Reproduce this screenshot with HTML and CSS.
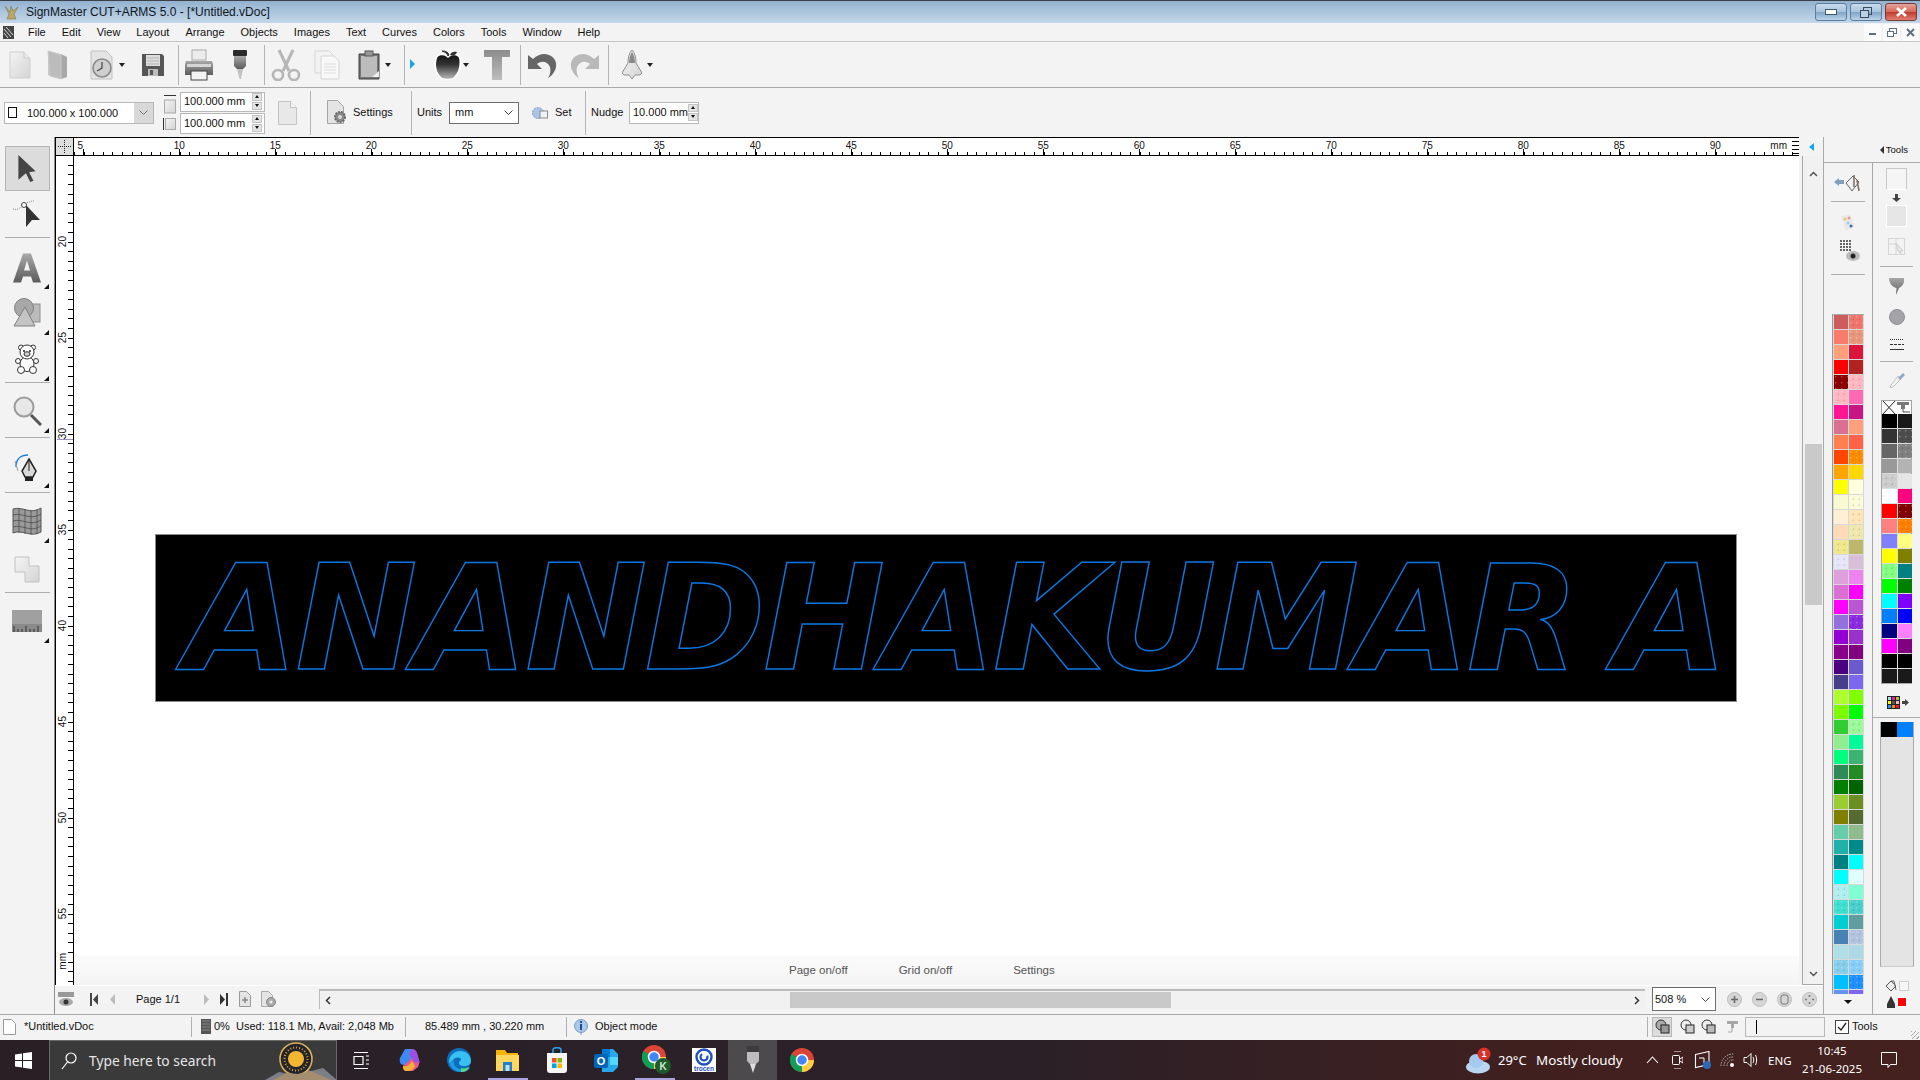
FILE: index.html
```html
<!DOCTYPE html>
<html lang="en">
<head>
<meta charset="utf-8">
<title>SignMaster CUT+ARMS 5.0</title>
<link rel="stylesheet" href="styles.css">
</head>
<body>
<svg class="defs" aria-hidden="true">
  <defs>
    <linearGradient id="gv" x1="0" y1="0" x2="0" y2="1"><stop offset="0" stop-color="#a8a8a8"/><stop offset="1" stop-color="#5c5c5c"/></linearGradient>
    <linearGradient id="gl" x1="0" y1="0" x2="1" y2="1"><stop offset="0" stop-color="#f4f4f4"/><stop offset="1" stop-color="#d4d4d4"/></linearGradient>
    <linearGradient id="gt" x1="0" y1="0" x2="0" y2="1"><stop offset="0" stop-color="#8c8c8c"/><stop offset="1" stop-color="#bdbdbd"/></linearGradient>
    <linearGradient id="ga" x1="0" y1="0" x2="0" y2="1"><stop offset="0" stop-color="#111"/><stop offset=".4" stop-color="#333"/><stop offset="1" stop-color="#bbb"/></linearGradient>
  </defs>
</svg>

<header class="titlebar">
  <svg class="ti" width="15" height="17" viewBox="0 0 15 17"><path d="M1 2l5 6 1-6 2 5 5-4-4 7 2 5H3l2-5z" fill="#b9a765" stroke="#7d7550" stroke-width=".6"/></svg>
  <span class="title-text">SignMaster CUT+ARMS 5.0 - [*Untitled.vDoc]</span>
  <div class="winbtns">
    <span class="wb"><svg width="12" height="7" viewBox="0 0 12 7"><rect x=".5" y=".5" width="11" height="5" fill="#fff" stroke="#44586e"/></svg></span>
    <span class="wb"><svg width="12" height="11" viewBox="0 0 12 11"><rect x="3.5" y=".5" width="8" height="7" fill="none" stroke="#3c4c5e"/><rect x=".5" y="3.5" width="8" height="7" fill="#b8d0e4" stroke="#3c4c5e"/></svg></span>
    <span class="wb wb-close"><svg width="13" height="10" viewBox="0 0 13 10"><path d="M2 1l9 8M11 1l-9 8" stroke="#fff" stroke-width="2.6"/></svg></span>
  </div>
</header>

<nav class="menubar">
  <svg class="menu-ic" width="11" height="13" viewBox="0 0 11 13"><rect width="11" height="13" fill="#444"/><path d="M1 3l7 8M3 1l7 8M1 7l4 5" stroke="#ddd"/></svg>
  <span>File</span><span>Edit</span><span>View</span><span>Layout</span><span>Arrange</span><span>Objects</span><span>Images</span><span>Text</span><span>Curves</span><span>Colors</span><span>Tools</span><span>Window</span><span>Help</span>
  <div class="mdibtns">
    <span class="mdi"><svg width="8" height="8" viewBox="0 0 8 8"><rect y="5" width="7" height="2" fill="#5f6f80"/></svg></span>
    <span class="mdi"><svg width="10" height="9" viewBox="0 0 10 9"><rect x="2.5" y=".5" width="7" height="5" fill="none" stroke="#5f6f80"/><rect x=".5" y="3.5" width="6" height="5" fill="#fff" stroke="#5f6f80"/></svg></span>
    <span class="mdi"><svg width="9" height="9" viewBox="0 0 9 9"><path d="M1 1l7 7M8 1l-7 7" stroke="#5f6f80" stroke-width="2"/></svg></span>
  </div>
</nav>

<section class="toolbar1">
  <span class="slot s1"><svg width="22" height="28" viewBox="0 0 22 28"><path d="M1 1h14l6 6v20H1z" fill="url(#gl)" stroke="#cfcfcf"/><path d="M15 1v6h6" fill="#e9e9e9" stroke="#cfcfcf"/></svg></span>
  <span class="slot s2"><svg width="22" height="32" viewBox="0 0 22 32"><path d="M1 2l13 3v2l6 1v20l-6 2-13-4z" fill="#c6c6c6"/><path d="M14 5l6 3v20l-6 2z" fill="#a9a9a9"/><path d="M1 2l13 4v24L3 27z" fill="#bcbcbc" stroke="#c9c9c9"/></svg></span>
  <span class="slot s3"><svg width="28" height="30" viewBox="0 0 28 30"><path d="M1 1h15l6 6v22H1z" fill="#e4e4e4" stroke="#c2c2c2"/><circle cx="12" cy="18" r="9" fill="#cfcfcf" stroke="#8a8a8a" stroke-width="1.6"/><path d="M12 12v6l-5 3" fill="none" stroke="#555" stroke-width="1.4"/></svg><i class="caret c3"></i></span>
  <span class="slot s4"><svg width="24" height="24" viewBox="0 0 24 24"><path d="M1 1h20l2 2v20H1z" fill="#565656"/><rect x="5" y="2" width="14" height="11" fill="#dedede"/><path d="M6 5h12M6 8h12M6 11h12" stroke="#b5b5b5"/><rect x="7" y="16" width="10" height="7" fill="#bdbdbd"/><rect x="9" y="17" width="3" height="5" fill="#555"/></svg></span>
  <i class="tsep"></i>
  <span class="slot s5"><svg width="30" height="32" viewBox="0 0 30 32"><rect x="8" y="1" width="14" height="10" fill="#ececec" stroke="#aaa"/><path d="M2 12h26l1 3v11H1V15z" fill="url(#gv)"/><rect x="3" y="15" width="24" height="3" fill="#d5d5d5"/><rect x="7" y="22" width="16" height="9" fill="#f3f3f3" stroke="#444"/></svg></span>
  <span class="slot s6"><svg width="16" height="30" viewBox="0 0 16 30"><rect x="1" y="0" width="14" height="6" rx="1" fill="#2a2a2a"/><path d="M2 6h12v10l-3 3H5l-3-3z" fill="url(#gv)"/><path d="M5 19h6l-2 10H7.500z" fill="#c2c2c2"/></svg></span>
  <i class="tsep"></i>
  <span class="slot s7"><svg width="30" height="32" viewBox="0 0 30 32"><g fill="none" stroke="#b6b6b6"><path d="M8 1l10 21M22 1L12 22" stroke-width="3"/><circle cx="7" cy="26" r="5" stroke-width="2.600"/><circle cx="23" cy="26" r="5" stroke-width="2.600"/></g></svg></span>
  <span class="slot s8"><svg width="26" height="30" viewBox="0 0 26 30"><path d="M1 1h14l4 4v18H1z" fill="#f3f3f3" stroke="#d5d5d5"/><path d="M7 6h13l5 5v18H7z" fill="#f8f8f8" stroke="#d5d5d5"/><path d="M10 14h12M10 17h12M10 20h12M10 23h12" stroke="#dcdcdc"/></svg></span>
  <span class="slot s9"><svg width="22" height="30" viewBox="0 0 22 30"><path d="M1 4h20v25H1z" fill="#777" stroke="#3e3e3e"/><rect x="3" y="6" width="16" height="21" fill="#bcbcbc"/><rect x="7" y="1" width="8" height="5" fill="#999" stroke="#555"/><path d="M14 27l7-6v6z" fill="#efefef"/></svg><i class="caret c9"></i></span>
  <i class="tsep"></i>
  <span class="slot s10"><i class="play"></i><svg width="30" height="32" viewBox="0 0 30 32"><path d="M15 8c4-4 11-3 12 2 1 8-2 15-6 19-3 2-10 2-13 0C4 25 1 18 3 10c1-5 8-6 12-2z" fill="url(#ga)" stroke="#fff" stroke-width="1.500"/><path d="M15 7c-1-3-3-4-6-5 4 0 6 1 7 4z" fill="#333" stroke="#333"/><path d="M17 6c1-3 4-4 7-3-1 3-4 4-7 3z" fill="#2c2c2c"/></svg><i class="caret c10"></i></span>
  <span class="slot s11"><svg width="26" height="30" viewBox="0 0 26 30"><path d="M0 0h26v7h-8v23H8V7H0z" fill="url(#gt)"/></svg></span>
  <i class="tsep"></i>
  <span class="slot s12"><svg width="30" height="28" viewBox="0 0 30 28"><path d="M0 4v14h14l-5-5c5-4 11-2 13 3 1 4 0 8-2 11 5-3 9-9 8-15C26 3 14-1 5 8z" fill="#666"/></svg></span>
  <span class="slot s13"><svg width="30" height="28" viewBox="0 0 30 28"><path d="M30 4v14H16l5-5c-5-4-11-2-13 3-1 4 0 8 2 11C5 24 1 18 2 12 4 3 16-1 25 8z" fill="#b9b9b9"/></svg></span>
  <i class="tsep"></i>
  <span class="slot s14"><svg width="22" height="30" viewBox="0 0 22 30"><path d="M11 0c3 3 4 8 4 13l6 10-2 2h-5l-3 4-3-4H3l-2-2 6-10c0-5 1-10 4-13z" fill="url(#gl)" stroke="#8f8f8f"/><path d="M11 2c2 3 3 7 3 11H8c0-4 1-8 3-11z" fill="#8a8a8a"/></svg><i class="caret c14"></i></span>
</section>

<section class="toolbar2">
  <div class="pagecombo">
    <i class="pc-rect"></i><span class="pc-text">100.000 x 100.000</span>
    <span class="pc-drop"><svg width="9" height="5" viewBox="0 0 9 5"><path d="M.5.500l4 4 4-4" fill="none" stroke="#777"/></svg></span>
  </div>
  <div class="sizeicons">
    <svg width="12" height="19" viewBox="0 0 12 19"><path d="M0 .500h12" stroke="#333"/><rect x=".5" y="5" width="11" height="13" fill="url(#gl)" stroke="#aaa"/></svg>
    <svg width="14" height="14" viewBox="0 0 14 14"><path d="M1.500 1v12" stroke="#333"/><rect x="3.500" y="1.500" width="10" height="11" fill="url(#gl)" stroke="#aaa"/></svg>
  </div>
  <div class="sizeboxes">
    <div class="sizebox"><span>100.000 mm</span><span class="spin"><i class="sp up"></i><i class="sp dn"></i></span></div>
    <div class="sizebox"><span>100.000 mm</span><span class="spin"><i class="sp up"></i><i class="sp dn"></i></span></div>
  </div>
  <svg class="pageic" width="19" height="24" viewBox="0 0 19 24"><path d="M.5.500h12l6 6v17H.5z" fill="#e8e8e8" stroke="#c4c4c4"/><path d="M12.500.500v6h6" fill="#f3f3f3" stroke="#c4c4c4"/></svg>
  <i class="bsep b1"></i>
  <svg class="setic" width="20" height="25" viewBox="0 0 20 25"><path d="M.5.500h10l6 6v17H.5z" fill="#e4e4e4" stroke="#a6a6a6"/><circle cx="13" cy="17" r="5" fill="#8a8a8a" stroke="#6a6a6a" stroke-width="2" stroke-dasharray="2 1"/><circle cx="13" cy="17" r="2" fill="#d8d8d8"/></svg>
  <span class="lbl settings">Settings</span>
  <i class="bsep b2"></i>
  <span class="lbl units">Units</span>
  <div class="unitcombo"><span>mm</span><svg width="9" height="5" viewBox="0 0 9 5"><path d="M.5.500l4 4 4-4" fill="none" stroke="#444"/></svg></div>
  <svg class="seticon" width="16" height="14" viewBox="0 0 16 14"><circle cx="6" cy="7" r="5.500" fill="#a9c5e6" stroke="#7f9cc0" stroke-dasharray="2 1"/><rect x="8" y="5" width="7.500" height="7" fill="#eef2f6" stroke="#8a8a8a"/></svg>
  <span class="lbl setlbl">Set</span>
  <i class="bsep b3"></i>
  <span class="lbl nudge">Nudge</span>
  <div class="nudgebox"><span>10.000 mm</span><span class="spin"><i class="sp up"></i><i class="sp dn"></i></span></div>
</section>

<main class="workrow">
  <aside class="lefttools">
    <div class="lt sel"><svg width="20" height="28" viewBox="0 0 18 26"><path d="M1 0l16 15-6 1 4 8-3 1-4-8-7 6z" fill="#444"/></svg></div>
    <div class="lt lt-node"><svg width="30" height="30" viewBox="0 0 30 30"><path d="M1 12c6 2 8-3 12-5 3-2 7-3 9-3" fill="none" stroke="#888" stroke-dasharray="1 1"/><circle cx="12" cy="8" r="2.500" fill="#fff" stroke="#444"/><path d="M14 8l14 15-8 0-6 7z" fill="#333"/></svg></div>
    <hr class="ltsep s-a">
    <div class="lt lt-a"><svg width="28" height="30" viewBox="0 0 28 29"><path d="M10 0h8l10 29h-8l-2-6H10l-2 6H0zm4 7l-3 10h6z" fill="url(#gv)" fill-rule="evenodd"/></svg><i class="corner"></i></div>
    <div class="lt lt-shape"><svg width="28" height="30" viewBox="0 0 28 30"><rect x="12" y="6" width="15" height="18" fill="#bcbcbc" stroke="#909090"/><circle cx="11" cy="10" r="9.500" fill="#a8a8a8" stroke="#808080"/><path d="M12 9l10 19H1z" fill="#c4c4c4" stroke="#808080"/></svg><i class="corner"></i></div>
    <div class="lt lt-bear"><svg width="24" height="30" viewBox="0 0 24 30"><g fill="#fff" stroke="#333"><circle cx="6" cy="3.500" r="2.500"/><circle cx="18" cy="3.500" r="2.500"/><ellipse cx="12" cy="20" rx="7" ry="7.500"/><circle cx="3" cy="17" r="2.500"/><circle cx="21" cy="17" r="2.500"/><circle cx="6" cy="26" r="3.500"/><circle cx="18" cy="26" r="3.500"/><circle cx="12" cy="8" r="7"/><ellipse cx="12" cy="10" rx="3" ry="2.300" fill="#ccc"/></g><circle cx="9" cy="7" r="1" fill="#222"/><circle cx="15" cy="7" r="1" fill="#222"/></svg><i class="corner"></i></div>
    <hr class="ltsep s-b">
    <div class="lt lt-mag"><svg width="30" height="30" viewBox="0 0 30 30"><circle cx="12" cy="11" r="9.500" fill="#e7e7e7" stroke="#9c9c9c" stroke-width="2"/><path d="M19 19l10 10" stroke="#555" stroke-width="3"/></svg><i class="corner"></i></div>
    <hr class="ltsep s-c">
    <div class="lt lt-pen"><svg width="26" height="30" viewBox="0 0 26 30"><path d="M2 16c0-8 5-12 12-12" fill="none" stroke="#1a7fe0" stroke-width="1.500"/><path d="M1 10l3 10" stroke="#999"/><path d="M15 8l7 12-3 6h-8l-3-6z" fill="#d8d8d8" stroke="#222" stroke-width="1.500"/><rect x="11" y="26" width="8" height="4" fill="#222"/><path d="M15 8v12" stroke="#222"/></svg><i class="corner"></i></div>
    <hr class="ltsep s-d">
    <div class="lt lt-map"><svg width="30" height="30" viewBox="0 0 30 30"><path d="M1 3c9-3 18 6 28-1v24c-10 6-19-3-28 1z" fill="#9a9a9a" stroke="#555"/><g fill="none" stroke="#4c4c4c" stroke-width=".8"><path d="M1 9c9-3 18 6 28-1M1 15c9-3 18 6 28-1M1 21c9-3 18 6 28-1M7 2v25M13 3v25M19 4v25M25 3v25"/></g></svg><i class="corner"></i></div>
    <div class="lt lt-squares"><svg width="26" height="27" viewBox="0 0 26 27"><path d="M1 1h14v9h10v16H11V16H1z" fill="url(#gl)" stroke="#c2c2c2"/></svg></div>
    <hr class="ltsep s-e">
    <div class="lt lt-ruler"><svg width="30" height="22" viewBox="0 0 30 22"><rect width="30" height="22" fill="#a0a0a0"/><rect y="14" width="30" height="8" fill="#8a8a8a"/><path d="M2 22v-6M6 22v-3M10 22v-3M14 22v-6M18 22v-3M22 22v-3M26 22v-6" stroke="#333"/></svg><i class="corner"></i></div>
  </aside>

  <div class="center">
    <div class="workgrid">
      <div class="corner-box"></div>
      <div class="hruler">
        <span class="hl hl-first">5</span><span class="hl">10</span><span class="hl">15</span><span class="hl">20</span><span class="hl">25</span><span class="hl">30</span><span class="hl">35</span><span class="hl">40</span><span class="hl">45</span><span class="hl">50</span><span class="hl">55</span><span class="hl">60</span><span class="hl">65</span><span class="hl">70</span><span class="hl">75</span><span class="hl">80</span><span class="hl">85</span><span class="hl">90</span><span class="hl-mm">mm</span>
        <i class="dots"></i>
      </div>
      <div class="expand"><i class="bluetri"></i></div>

      <div class="vruler">
        <span class="vl vl-first"><b>20</b></span><span class="vl"><b>25</b></span><span class="vl"><b>30</b></span><span class="vl"><b>35</b></span><span class="vl"><b>40</b></span><span class="vl"><b>45</b></span><span class="vl"><b>50</b></span><span class="vl"><b>55</b></span><span class="vl vl-mm"><b>mm</b></span>
        <i class="cursorline"></i>
      </div>
      <div class="canvas">
        <div class="artwork"><span class="arttext">ANANDHAKUMAR A</span></div>
        <div class="canvas-foot"><span>Page on/off</span><span>Grid on/off</span><span>Settings</span></div>
      </div>
      <div class="vscroll">
        <svg width="9" height="6" viewBox="0 0 9 6"><path d="M1 5l3.500-3.500L8 5" fill="none" stroke="#555" stroke-width="1.500"/></svg>
        <i class="vthumb"></i>
        <svg width="9" height="6" viewBox="0 0 9 6"><path d="M1 1l3.500 3.500L8 1" fill="none" stroke="#555" stroke-width="1.500"/></svg>
      </div>
    </div>
    <div class="pager">
      <svg class="pg pg-eye" width="16" height="16" viewBox="0 0 16 16"><rect y="1" width="16" height="5" fill="#999"/><ellipse cx="8" cy="11" rx="7" ry="4" fill="#aaa"/><circle cx="8" cy="11" r="2.500" fill="#333"/></svg>
      <svg class="pg pg-first" width="8" height="13" viewBox="0 0 8 13"><rect width="2" height="13" fill="#444"/><path d="M8 1v11L3 6.500z" fill="#444"/></svg>
      <svg class="pg pg-prev" width="5" height="11" viewBox="0 0 5 11"><path d="M5 0v11L0 5.500z" fill="#bcbcbc"/></svg>
      <span class="pagetext">Page 1/1</span>
      <svg class="pg pg-next" width="5" height="11" viewBox="0 0 5 11"><path d="M0 0v11l5-5.500z" fill="#bcbcbc"/></svg>
      <svg class="pg pg-last" width="8" height="13" viewBox="0 0 8 13"><path d="M0 1v11l5-5.500z" fill="#333"/><rect x="6" width="2" height="13" fill="#333"/></svg>
      <svg class="pg pg-add" width="12" height="16" viewBox="0 0 12 16"><path d="M.5.500h7l4 4v11H.5z" fill="#e4e4e4" stroke="#999"/><path d="M6 6v6M3 9h6" stroke="#888" stroke-width="1.500"/></svg>
      <svg class="pg pg-set" width="16" height="17" viewBox="0 0 16 17"><path d="M.5.500h7l4 4v11H.5z" fill="#e4e4e4" stroke="#aaa"/><circle cx="10" cy="11" r="4.500" fill="#aaa" stroke="#888"/><circle cx="10" cy="11" r="1.500" fill="#eee"/></svg>
      <div class="hscroll">
        <svg width="6" height="9" viewBox="0 0 6 9"><path d="M5 1L1.500 4.500 5 8" fill="none" stroke="#333" stroke-width="1.500"/></svg>
        <i class="hthumb"></i>
        <svg width="6" height="9" viewBox="0 0 6 9"><path d="M1 1l3.500 3.500L1 8" fill="none" stroke="#333" stroke-width="1.500"/></svg>
      </div>
      <div class="zoomcombo"><span>508 %</span><svg width="9" height="5" viewBox="0 0 9 5"><path d="M.5.500l4 4 4-4" fill="none" stroke="#444"/></svg></div>
      <span class="zb"><svg width="15" height="15" viewBox="0 0 15 15"><path d="M7.500 4v7M4 7.500h7" stroke="#666" stroke-width="1.500"/></svg></span>
      <span class="zb"><svg width="15" height="15" viewBox="0 0 15 15"><path d="M4 7.500h7" stroke="#666" stroke-width="1.500"/></svg></span>
      <span class="zb"><svg width="15" height="15" viewBox="0 0 15 15"><rect x="4" y="3" width="7" height="9" rx="2" fill="none" stroke="#777"/></svg></span>
      <span class="zb"><svg width="15" height="15" viewBox="0 0 15 15"><path d="M7.500 3v2M7.500 10v2M3 7.500h2M10 7.500h2" stroke="#777" stroke-width="1.500"/></svg></span>
    </div>
  </div>

  <aside class="rightpanel">
    <div class="rp-head"><i class="rp-tri"></i><span>Tools</span></div>
    <div class="rp-cols">
      <div class="rp-col1">
        <svg class="r-fill" width="26" height="18" viewBox="0 0 26 18"><path d="M0 8l5-4v2h5v4H5v2z" fill="#7f9fc0"/><path d="M12 9l7-7 6 6-7 9z" fill="#f1f1f1" stroke="#666"/><path d="M20 1v12M23 6l2 11" stroke="#7a6a60" stroke-width="1.500"/></svg>
        <hr class="rsep r1">
        <svg class="r-pal" width="14" height="16" viewBox="0 0 14 16"><path d="M0 1l9-1 5 11-9 5z" fill="#e8e8e8"/><circle cx="4" cy="4" r="1.500" fill="#e4c66c"/><circle cx="8" cy="3" r="1.500" fill="#e79a9a"/><circle cx="7" cy="8" r="1.500" fill="#9bc8e8"/><circle cx="10" cy="11" r="1.500" fill="#3a6db0"/></svg>
        <svg class="r-grid" width="20" height="22" viewBox="0 0 20 22"><g fill="#666"><rect width="2" height="2"/><rect x="3" width="2" height="2"/><rect x="6" width="2" height="2"/><rect x="9" width="2" height="2"/><rect y="3" width="2" height="2"/><rect x="3" y="3" width="2" height="2"/><rect x="6" y="3" width="2" height="2"/><rect x="9" y="3" width="2" height="2"/><rect y="6" width="2" height="2"/><rect x="3" y="6" width="2" height="2"/><rect x="6" y="6" width="2" height="2"/><rect x="9" y="6" width="2" height="2"/><rect y="9" width="2" height="2"/><rect x="3" y="9" width="2" height="2"/><rect x="6" y="9" width="2" height="2"/><rect x="9" y="9" width="2" height="2"/></g><ellipse cx="13" cy="16" rx="7" ry="5" fill="#bbb"/><circle cx="13" cy="16" r="2.500" fill="#222"/></svg>
        <hr class="rsep r2">
        <div class="palette1">
          <div class="swatches">
<i style="background-color:#cd5c5c"></i><i class="d" style="background-color:#f0766a"></i><i style="background-color:#fa7a6c"></i><i class="d" style="background-color:#e9967a"></i><i style="background-color:#ffa07a"></i><i style="background-color:#dc143c"></i><i style="background-color:#ff0000"></i><i style="background-color:#b22222"></i><i class="d" style="background-color:#8b0000"></i><i class="d" style="background-color:#ffb6c1"></i><i class="d" style="background-color:#ffb6c1"></i><i style="background-color:#ff69b4"></i><i style="background-color:#ff1493"></i><i style="background-color:#c71585"></i><i style="background-color:#db7093"></i><i style="background-color:#ffa07a"></i><i style="background-color:#ff7f50"></i><i style="background-color:#ff6347"></i><i style="background-color:#ff4500"></i><i class="d" style="background-color:#ff8c00"></i><i style="background-color:#ffa500"></i><i style="background-color:#ffd700"></i><i style="background-color:#ffff00"></i><i style="background-color:#ffffe0"></i><i style="background-color:#fafad2"></i><i class="d" style="background-color:#fbfbd8"></i><i style="background-color:#ffefd5"></i><i class="d" style="background-color:#ffe4b5"></i><i style="background-color:#ffdab9"></i><i class="d" style="background-color:#eee8aa"></i><i class="d" style="background-color:#f0e68c"></i><i style="background-color:#bdb76b"></i><i class="d" style="background-color:#e6e6fa"></i><i style="background-color:#d8bfd8"></i><i style="background-color:#dda0dd"></i><i style="background-color:#ee82ee"></i><i style="background-color:#da70d6"></i><i style="background-color:#ff00ff"></i><i style="background-color:#ff00ff"></i><i style="background-color:#ba55d3"></i><i style="background-color:#9370db"></i><i class="d" style="background-color:#8a2be2"></i><i style="background-color:#9400d3"></i><i style="background-color:#9932cc"></i><i style="background-color:#8b008b"></i><i style="background-color:#800080"></i><i style="background-color:#4b0082"></i><i style="background-color:#6a5acd"></i><i style="background-color:#483d8b"></i><i style="background-color:#7b68ee"></i><i style="background-color:#adff2f"></i><i style="background-color:#7fff00"></i><i style="background-color:#7cfc00"></i><i style="background-color:#00ff00"></i><i style="background-color:#32cd32"></i><i class="d" style="background-color:#98fb98"></i><i style="background-color:#90ee90"></i><i style="background-color:#00fa9a"></i><i style="background-color:#00ff7f"></i><i style="background-color:#3cb371"></i><i style="background-color:#2e8b57"></i><i style="background-color:#228b22"></i><i style="background-color:#008000"></i><i style="background-color:#006400"></i><i style="background-color:#9acd32"></i><i style="background-color:#6b8e23"></i><i style="background-color:#808000"></i><i style="background-color:#556b2f"></i><i style="background-color:#66cdaa"></i><i style="background-color:#8fbc8f"></i><i style="background-color:#20b2aa"></i><i style="background-color:#008b8b"></i><i style="background-color:#008080"></i><i style="background-color:#00ffff"></i><i style="background-color:#00ffff"></i><i style="background-color:#e0ffff"></i><i class="d" style="background-color:#afeeee"></i><i style="background-color:#7fffd4"></i><i class="d" style="background-color:#40e0d0"></i><i class="d" style="background-color:#48d1cc"></i><i style="background-color:#00ced1"></i><i style="background-color:#5f9ea0"></i><i style="background-color:#4682b4"></i><i class="d" style="background-color:#b0c4de"></i><i style="background-color:#b0e0e6"></i><i style="background-color:#add8e6"></i><i class="d" style="background-color:#87ceeb"></i><i class="d" style="background-color:#87cefa"></i><i style="background-color:#00bfff"></i><i class="d" style="background-color:#1e90ff"></i><i style="background-color:#6495ed"></i><i style="background-color:#7b68ee"></i>
          </div>
        </div>
        <i class="pal-down"></i>
      </div>
      <div class="rp-col2">
        <i class="fbox fbox-a"></i>
        <svg class="r-arrow" width="9" height="8" viewBox="0 0 9 8"><path d="M3 0h3v4h3L4.500 8 0 4h3z" fill="#444"/></svg>
        <i class="fbox fbox-b"></i>
        <svg class="r-sel" width="17" height="17" viewBox="0 0 17 17"><rect x=".5" y=".5" width="16" height="16" fill="none" stroke="#d6d6d6"/><path d="M1 6h7v10M8 1v5" fill="none" stroke="#d6d6d6"/><path d="M8 5l7 8-3 0 1 3-3-3z" fill="#e6e6e6" stroke="#cfcfcf"/></svg>
        <hr class="rsep r3">
        <svg class="r-funnel" width="15" height="17" viewBox="0 0 15 17"><path d="M0 0h15c1 5-2 9-5 10l-3 7 .5-7C3 9 0 5 0 0z" fill="url(#gv)"/></svg>
        <svg class="r-circle" width="16" height="16" viewBox="0 0 16 16"><circle cx="8" cy="8" r="7.500" fill="#a4a4a8" stroke="#909094"/></svg>
        <svg class="r-lines" width="14" height="11" viewBox="0 0 14 11"><path d="M0 .500h14" stroke="#333" stroke-dasharray="1 1"/><path d="M0 5.500h14" stroke="#333" stroke-dasharray="3 1"/><path d="M0 10.500h14" stroke="#333"/></svg>
        <hr class="rsep r4">
        <svg class="r-drop" width="16" height="16" viewBox="0 0 16 16"><path d="M9 4l3 3-8 8-3 1 1-3z" fill="#f0f0f0" stroke="#c4c4c4"/><path d="M9 6l5-5 2 2-5 5z" fill="#8aa8d0"/></svg>
        <div class="palette2">
          <div class="pal2-head"><svg width="14" height="13" viewBox="0 0 14 13"><path d="M1 0l12 13M13 0L1 13" stroke="#222"/></svg><svg width="14" height="13" viewBox="0 0 14 13"><path d="M1 1h12v3H9v4H5V4H1z" fill="#777"/><path d="M7 8v3h7" fill="none" stroke="#555"/></svg></div>
          <div class="swatches s2col">
<i style="background-color:#000000"></i><i style="background-color:#1a1a1a"></i><i style="background-color:#333333"></i><i class="d" style="background-color:#4d4d4d"></i><i style="background-color:#666666"></i><i class="d" style="background-color:#808080"></i><i style="background-color:#999999"></i><i style="background-color:#b3b3b3"></i><i class="d" style="background-color:#cccccc"></i><i style="background-color:#e6e6e6"></i><i style="background-color:#ffffff"></i><i style="background-color:#ff007f"></i><i style="background-color:#ff0000"></i><i class="d" style="background-color:#800000"></i><i style="background-color:#ff8080"></i><i class="d" style="background-color:#ff8000"></i><i style="background-color:#8080ff"></i><i style="background-color:#ffff80"></i><i style="background-color:#ffff00"></i><i style="background-color:#808000"></i><i class="d" style="background-color:#80ff80"></i><i style="background-color:#008080"></i><i style="background-color:#00ff00"></i><i style="background-color:#008000"></i><i style="background-color:#00ffff"></i><i style="background-color:#8000ff"></i><i style="background-color:#0080ff"></i><i style="background-color:#0000ff"></i><i style="background-color:#000080"></i><i style="background-color:#ff80ff"></i><i style="background-color:#ff00ff"></i><i style="background-color:#800080"></i><i style="background-color:#000000"></i><i style="background-color:#000000"></i><i style="background-color:#1a1a1a"></i><i style="background-color:#1a1a1a"></i>
          </div>
        </div>
        <div class="palmenu"><svg width="13" height="13" viewBox="0 0 13 13"><rect width="13" height="13" fill="#222"/><rect x="1" y="1" width="3" height="3" fill="#90e8e8"/><rect x="5" y="1" width="3" height="3" fill="#ff1493"/><rect x="9" y="1" width="3" height="3" fill="#9acd32"/><rect x="1" y="5" width="3" height="3" fill="#ffff00"/><rect x="5" y="5" width="3" height="3" fill="#555"/><rect x="9" y="5" width="3" height="3" fill="#ffb6c1"/><rect x="1" y="9" width="3" height="3" fill="#1e90ff"/><rect x="5" y="9" width="3" height="3" fill="#ff8c00"/><rect x="9" y="9" width="3" height="3" fill="#f01030"/></svg><svg width="7" height="7" viewBox="0 0 7 7"><path d="M0 2h3V0l4 3.500L3 7V5H0z" fill="#444"/></svg></div>
        <hr class="rsep r5">
        <div class="docwell"><div class="docrow"><i class="dc-k"></i><i class="dc-b"></i></div></div>
        <div class="fillstroke">
          <div class="fs"><svg width="12" height="11" viewBox="0 0 12 11"><path d="M1 6l5-5 5 5-5 5z" fill="#eee" stroke="#555"/><path d="M6 1h3l2 9" fill="none" stroke="#666"/></svg><i class="fs-box"></i></div>
          <div class="fs"><svg width="8" height="12" viewBox="0 0 8 12"><path d="M4 0l4 8v4H0V8z" fill="#333"/></svg><i class="fs-box fs-red"></i></div>
        </div>
      </div>
    </div>
  </aside>
</main>

<footer class="statusbar">
  <svg class="st-doc" width="13" height="16" viewBox="0 0 13 16"><path d="M.5.500h8l4 4v11H.5z" fill="#fff" stroke="#999"/></svg>
  <span class="st st-name">*Untitled.vDoc</span>
  <i class="ssep ss1"></i>
  <svg class="st-chip" width="10" height="15" viewBox="0 0 10 15"><rect width="10" height="15" fill="#555"/><path d="M1 2h8M1 5h8M1 8h8M1 11h8" stroke="#888"/></svg>
  <span class="st st-pct">0%</span>
  <span class="st st-mem">Used: 118.1 Mb, Avail: 2,048 Mb</span>
  <i class="ssep ss2"></i>
  <span class="st st-pos">85.489 mm , 30.220 mm</span>
  <i class="ssep ss3"></i>
  <svg class="st-info" width="14" height="16" viewBox="0 0 14 16"><ellipse cx="7" cy="7" rx="6.500" ry="6.500" fill="#a9c8ea" stroke="#7a9cc4"/><path d="M7 13v3" stroke="#7a9cc4"/><rect x="6" y="5" width="2" height="6" fill="#1d4f8f"/><rect x="6" y="2" width="2" height="2" fill="#1d4f8f"/></svg>
  <span class="st st-mode">Object mode</span>
  <i class="ssep ss4"></i>
  <span class="mode-btn active"><svg width="15" height="15" viewBox="0 0 15 15"><circle cx="6" cy="6" r="5" fill="#aaa" stroke="#333"/><rect x="6" y="6" width="8" height="8" fill="#999" stroke="#222"/></svg></span>
  <span class="mode-btn mb2"><svg width="15" height="15" viewBox="0 0 15 15"><circle cx="6" cy="6" r="5" fill="#eee" stroke="#333"/><rect x="6" y="6" width="8" height="8" fill="#ccc" stroke="#222"/></svg></span>
  <span class="mode-btn mb3"><svg width="15" height="15" viewBox="0 0 15 15"><circle cx="6" cy="6" r="5" fill="#eee" stroke="#333"/><rect x="6" y="6" width="8" height="8" fill="#bbb" stroke="#222"/></svg></span>
  <span class="mode-btn mb4 faded"><svg width="13" height="14" viewBox="0 0 13 14"><path d="M1 1h11v3H8v4H5V4H1z" fill="#888"/><path d="M6 8v4H2" fill="none" stroke="#888"/></svg></span>
  <div class="st-field"><i></i></div>
  <span class="st-check"><svg width="12" height="12" viewBox="0 0 12 12"><path d="M2 6l3 3 5-7" fill="none" stroke="#222" stroke-width="1.300"/></svg></span>
  <span class="st st-tools">Tools</span>
  <i class="grip"></i>
</footer>

<footer class="taskbar">
  <svg class="tk-win" width="17" height="17" viewBox="0 0 17 17"><path d="M0 2.500l7-1V8H0zM8 1.300L17 0v8H8zM0 9h7v6.500l-7-1zM8 9h9v8l-9-1.300z" fill="#fff"/></svg>
  <div class="searchbox">
    <svg width="16" height="18" viewBox="0 0 16 18"><circle cx="10" cy="6" r="5" fill="none" stroke="#fff" stroke-width="1.200"/><path d="M6.500 10L1 17" stroke="#fff" stroke-width="1.200"/></svg>
    <span>Type here to search</span>
    <svg class="sunpic" width="72" height="39" viewBox="0 0 72 39"><path d="M0 39l14-8 10 2 12-6 10 3 12-3 14 12z" fill="#7c7f86"/><circle cx="31" cy="18" r="16" fill="#20242c" stroke="#e0ad5a" stroke-width="1.600"/><circle cx="31" cy="18" r="8" fill="#f2b632"/><circle cx="31" cy="18" r="11.500" fill="none" stroke="#e89a28" stroke-width="2" stroke-dasharray="1 2"/><path d="M8 39l14-7 11 1 13-3 20 9z" fill="#a58e70"/></svg>
  </div>
  <span class="tk tk-first"><svg width="16" height="17" viewBox="0 0 16 17"><path d="M1 .500h14M1 16.500h14M1 4.500h9v8H1zM13 4h3M13 8h3M13 12h3" fill="none" stroke="#fff" stroke-width="1.200"/></svg></span>
  <span class="tk"><svg width="22" height="24" viewBox="0 0 22 24"><path d="M6 1h6c3 0 3 3 4 6l-6 10H5C1 17 0 13 1 10z" fill="#3d8af0"/><path d="M12 1c3 0 5 2 6 6 2 5 3 9 1 12l-5 4H8c-3 0-4-2-4-5l8-7z" fill="#e85a8a"/><path d="M4 18c4 1 7-1 9-5l3 5c-2 4-4 5-8 5-3 0-4-2-4-5z" fill="#f5b335"/><path d="M10 6l3-5c4 0 5 3 6 7l2 7-6-1z" fill="#9c4fe0"/></svg></span>
  <span class="tk"><svg width="24" height="24" viewBox="0 0 24 24"><circle cx="12" cy="12" r="12" fill="#0f6cbd"/><path d="M2 14C2 7 8 3 13 3c6 0 11 4 11 10 0 4-4 5-7 5-4 0-5-2-5-3 0-2 2-2 2-4-1-2-5-2-7 0-3 2-5 6-5 3z" fill="#35c1f1"/><path d="M3 17c2 4 6 7 12 7 4 0 7-2 8-5-3 2-9 3-13 1-3-2-4-6-3-8-3 1-5 3-4 5z" fill="#1b9de2"/><path d="M14 24c4 0 7-2 8-5-2 1-5 2-8 1z" fill="#5ad67d"/></svg></span>
  <span class="tk tk-run"><svg width="23" height="22" viewBox="0 0 23 22"><path d="M0 1h9l2 3h11v7H0z" fill="#f4b400"/><path d="M0 6h23v16H0z" fill="#ffd75e"/><rect x="7" y="13" width="9" height="9" fill="#1f7fc8"/><rect x="9.500" y="16" width="4" height="6" fill="#bfe0f5"/></svg></span>
  <span class="tk"><svg width="22" height="26" viewBox="0 0 22 26"><path d="M7 6V3c0-3 8-3 8 0v3" fill="none" stroke="#2aa0e8" stroke-width="1.600"/><path d="M1 6h20v17c0 2-1 3-3 3H4c-2 0-3-1-3-3z" fill="#f5f5f5"/><rect x="6" y="11" width="4.500" height="4.500" fill="#f25022"/><rect x="11.500" y="11" width="4.500" height="4.500" fill="#7fba00"/><rect x="6" y="16.500" width="4.500" height="4.500" fill="#00a4ef"/><rect x="11.500" y="16.500" width="4.500" height="4.500" fill="#ffb900"/></svg></span>
  <span class="tk"><svg width="24" height="24" viewBox="0 0 24 24"><path d="M8 1h11l5 5v13l-5 5H8z" fill="#28a8ea"/><path d="M8 1h8v8H8z" fill="#0078d4"/><path d="M16 9h8v8h-8z" fill="#50d9ff"/><rect y="6" width="14" height="14" rx="2" fill="#0364b8"/><text x="7" y="17" class="o-letter">O</text></svg></span>
  <span class="tk tk-run"><svg class="chrome-k" width="30" height="30" viewBox="0 0 30 30"><circle cx="12" cy="12" r="12" fill="#db4437"/><path d="M12 12L1.600 6A12 12 0 0 0 12 24z" fill="#0f9d58"/><path d="M12 12h12A12 12 0 0 1 12 24z" fill="#ffcd40"/><circle cx="12" cy="12" r="5.500" fill="#4285f4" stroke="#fff" stroke-width="1.500"/><circle cx="21" cy="21" r="8" fill="#1d5a2c"/><text x="21" y="24.500" class="k-letter">K</text></svg></span>
  <span class="tk"><svg width="24" height="24" viewBox="0 0 24 24"><rect width="24" height="24" fill="#fff"/><circle cx="12" cy="9" r="7.500" fill="none" stroke="#1f4fc0" stroke-width="2.400"/><circle cx="12" cy="9" r="3.500" fill="none" stroke="#1f4fc0" stroke-width="2.200" stroke-dasharray="14 6"/><text x="12" y="23" class="t-letter">trocen</text></svg></span>
  <span class="tk tk-active"><svg width="14" height="28" viewBox="0 0 14 28"><rect x="1" width="12" height="6" fill="#3c3c3c"/><path d="M1 6h12v9l-3 3H4l-3-3z" fill="#bdbdbd"/><path d="M4 18h6l-3 9z" fill="#ddd"/></svg></span>
  <span class="tk"><svg width="24" height="24" viewBox="0 0 24 24"><circle cx="12" cy="12" r="12" fill="#db4437"/><path d="M12 12L1.600 6A12 12 0 0 0 12 24z" fill="#0f9d58"/><path d="M12 12h12A12 12 0 0 1 12 24z" fill="#ffcd40"/><circle cx="12" cy="12" r="5.500" fill="#4285f4" stroke="#fff" stroke-width="1.500"/></svg></span>

  <div class="tray">
    <span class="weather"><svg width="26" height="28" viewBox="0 0 26 28"><ellipse cx="13" cy="21" rx="12" ry="6.500" fill="#b9d5f2"/><circle cx="11" cy="15" r="7" fill="#a5c9ef"/><circle cx="19" cy="8" r="6.500" fill="#d9322c"/><text x="19" y="11" class="w-badge">1</text></svg></span>
    <span class="temp">29°C</span><span class="cond">Mostly cloudy</span>
    <svg class="chev" width="13" height="8" viewBox="0 0 13 8"><path d="M1 7l5.500-6L12 7" fill="none" stroke="#fff" stroke-width="1.100"/></svg>
    <svg class="tr-a" width="11" height="18" viewBox="0 0 11 18"><path d="M2 0h7M2 18h7" stroke="#fff"/><rect x=".5" y="4.500" width="7" height="9" rx="1" fill="none" stroke="#fff"/><path d="M8 8l3-2v6l-3-2" fill="none" stroke="#fff"/></svg>
    <svg class="tr-b" width="17" height="18" viewBox="0 0 17 18"><path d="M1.500 3.500L15 .500v13L1.500 16.500z" fill="none" stroke="#fff" stroke-width="1.100"/><path d="M5 7h5v5" fill="none" stroke="#fff"/><circle cx="13" cy="14" r="4" fill="#2a6ab8"/></svg>
    <svg class="tr-c" width="15" height="14" viewBox="0 0 15 14"><path d="M1 13A12 12 0 0 1 14 1M4 13a9 9 0 0 1 10-9M7 13a6 6 0 0 1 7-6" fill="none" stroke="#bbb" stroke-dasharray="1.500 1"/><circle cx="12" cy="12" r="2" fill="#fff"/></svg>
    <svg class="tr-d" width="15" height="16" viewBox="0 0 15 16"><path d="M1 5.500h3l4-4v13l-4-4H1z" fill="none" stroke="#fff"/><path d="M10 5c1 2 1 4 0 6M12.500 3c1.500 3 1.500 7 0 10" fill="none" stroke="#fff"/></svg>
    <span class="eng">ENG</span>
    <span class="clock"><span>10:45</span><span>21-06-2025</span></span>
    <svg class="notif" width="16" height="16" viewBox="0 0 16 16"><path d="M.5.500h15v12h-6L7 15.500v-3H.5z" fill="none" stroke="#fff"/></svg>
  </div>
</footer>
</body>
</html>
```
FILE: styles.css
```css
* { box-sizing: border-box; }
html, body { margin: 0; padding: 0; }
body {
  width: 1920px; height: 1080px; overflow: hidden;
  display: flex; flex-direction: column;
  background: #f3f3f3; color: #111;
  font: 11px/13px "Liberation Sans", Arial, sans-serif;
}
i { display: block; font-style: normal; }
hr { margin: 0; border: 0; }
.defs { width: 0; height: 0; display: block; flex: none; }

/* title bar */
.titlebar {
  height: 23px; flex: none; display: flex; align-items: center; padding-left: 4px;
  border-top: 1px solid #3c4148;
  background: linear-gradient(to bottom, #93b2d0 0%, #a9c3dc 45%, #c3d7ea 100%);
}
.title-text { margin-left: 7px; font-size: 12px; color: #10161c; }
.winbtns { margin-left: auto; margin-right: 3px; display: flex; gap: 3px; }
.wb {
  width: 32px; height: 18px; display: flex; align-items: center; justify-content: center;
  border: 1px solid #5b7da0; border-radius: 3px;
  background: linear-gradient(to bottom, #c8dbec 0%, #a8c4dd 48%, #7fa5c8 52%, #bcd4e8 100%);
}
.wb-close { border-color: #7c3a36; background: linear-gradient(to bottom, #e2a39b 0%, #d66a5c 48%, #c03a2c 52%, #e08070 100%); }

/* menu */
.menubar {
  height: 19px; flex: none; display: flex; align-items: center; gap: 16px; padding-left: 3px;
  background: #f3f3f3; border-bottom: 1px solid #c6c6c6;
}
.menu-ic { margin-right: -2px; }
.mdibtns { margin-left: auto; margin-right: 1px; display: flex; gap: 2px; }
.mdi { width: 17px; height: 17px; background: #fbfbfb; display: flex; align-items: center; justify-content: center; }

/* toolbar 1 */
.toolbar1 { height: 46px; flex: none; display: flex; align-items: center; border-bottom: 1px solid #a9a9a9; background: #f3f3f3; }
.slot { display: flex; align-items: center; justify-content: center; position: relative; height: 40px; flex: none; }
.tsep { width: 1px; height: 40px; background: #b4b4b4; flex: none; }
.s1 { width: 40px; } .s2 { width: 36px; } .s3 { width: 52px; padding-left: 4px; } .s4 { width: 50px; }
.s5 { width: 40px; } .s6 { width: 42px; margin-right: 3px; }
.s7 { width: 42px; } .s8 { width: 40px; } .s9 { width: 44px; margin-right: 13px; }
.s10 { width: 32px; margin-left: 27px; } .s11 { width: 46px; margin-left: 10px; }
.s12 { width: 44px; } .s13 { width: 38px; margin-right: 5px; } .s14 { width: 46px; }
.caret { position: absolute; width: 0; height: 0; border: 3px solid transparent; border-top: 4px solid #222; border-bottom: 0; top: 18px; }
.c3 { right: 3px; } .c9 { right: 0; } .c10 { right: -5px; } .c14 { right: 2px; }
.play { position: absolute; left: -22px; top: 14px; width: 0; height: 0; border: 5px solid transparent; border-left: 5px solid #11a6ee; border-right: 0; }

/* toolbar 2 */
.toolbar2 { height: 49px; flex: none; display: flex; align-items: center; padding-left: 4px; background: #f3f3f3; }
.pagecombo { width: 150px; height: 22px; display: flex; align-items: center; background: #fff; border: 1px solid #b8b8b8; }
.pc-rect { width: 9px; height: 11px; border: 1px solid #111; margin-left: 3px; }
.pc-text { margin-left: 10px; padding-top: 2px; }
.pc-drop { margin-left: auto; width: 19px; height: 20px; background: #d8d8d8; display: flex; align-items: center; justify-content: center; }
.sizeicons { margin-left: 8px; width: 14px; display: flex; flex-direction: column; align-items: flex-end; gap: 3px; }
.sizeboxes { margin-left: 4px; width: 85px; display: flex; flex-direction: column; gap: 1px; }
.sizebox, .nudgebox { display: flex; align-items: center; justify-content: space-between; background: #fff; border: 1px solid #b8b8b8; white-space: nowrap; }
.sizebox { height: 20.5px; padding: 0 2px 0 3px; }
.spin { display: flex; flex-direction: column; gap: 1px; flex: none; }
.sp { width: 10px; height: 8px; background: #e4e4e4; border: 1px solid #c4c4c4; position: relative; }
.sp::before { content: ""; position: absolute; left: 2px; top: 1px; width: 0; height: 0; border: 2px solid transparent; }
.up::before { border-bottom: 3px solid #111; border-top: 0; }
.dn::before { border-top: 3px solid #111; border-bottom: 0; }
.pageic { margin-left: 13px; }
.bsep { width: 1px; height: 44px; background: #b4b4b4; flex: none; }
.b1 { margin-left: 13px; }
.setic { margin-left: 16px; }
.lbl { flex: none; }
.settings { margin-left: 6px; width: 58px; }
.units { margin-left: 5px; width: 32px; }
.unitcombo { width: 70px; height: 22px; display: flex; align-items: center; justify-content: space-between; padding: 0 5px; background: #fff; border: 1px solid #6e6e6e; }
.seticon { margin-left: 13px; }
.setlbl { margin-left: 7px; width: 30px; }
.nudge { margin-left: 5px; width: 38px; }
.nudgebox { width: 70px; height: 22px; padding: 0 1px 0 3px; }

/* work */
.workrow { flex: 1; min-height: 0; display: flex; }
.lefttools { width: 55px; flex: none; border-right: 1px solid #8e8e8e; display: flex; flex-direction: column; align-items: center; background: #f3f3f3; padding-top: 9px; }
.lt { position: relative; display: flex; align-items: center; justify-content: center; width: 45px; flex: none; }
.lt.sel { height: 45px; background: #dcdcdc; border: 1px solid #b6b6b6; }
.lt-node { height: 42px; }
.lt-a { height: 44px; margin-top: 8px; }
.lt-shape { height: 46px; }
.lt-bear { height: 46px; }
.lt-mag { height: 46px; margin-top: 5px; }
.lt-pen { height: 46px; margin-top: 5px; }
.lt-map { height: 46px; margin-top: 5px; }
.lt-squares { height: 46px; margin-top: 2px; }
.lt-ruler { height: 46px; margin-top: 5px; }
.ltsep { width: 45px; height: 1px; background: #aeaeae; flex: none; }
.s-a { margin-top: 4px; }
.s-b { margin-top: 0; }
.s-c { margin-top: 3px; }
.s-d { margin-top: 3px; }
.s-e { margin-top: 0; }
.corner { position: absolute; right: 1px; bottom: 1px; width: 0; height: 0; border-style: solid; border-width: 0 0 5px 5px; border-color: transparent transparent #111 transparent; }

.center { width: 1769px; flex: none; display: flex; flex-direction: column; border-right: 1px solid #aaa; }
.workgrid { flex: 1; min-height: 0; display: grid; grid-template-columns: 18px 1726px 1fr; grid-template-rows: 19px 1fr; }
.corner-box {
  border-top: 1px solid #000; border-left: 1px solid #000; border-bottom: 1px solid #000;
  background:
    repeating-linear-gradient(to right, #222 0 1px, transparent 1px 2px) center / 13px 1px no-repeat,
    repeating-linear-gradient(to bottom, #222 0 1px, transparent 1px 2px) center / 1px 13px no-repeat,
    #dedede;
}
.hruler {
  position: relative; display: flex; padding-left: 0;
  border-top: 1px solid #000; border-bottom: 1px solid #000; border-left: 1px solid #000;
  background:
    repeating-linear-gradient(to right, #000 0 1px, transparent 1px 96px) 9.3px 100% / 100% 6px no-repeat,
    repeating-linear-gradient(to right, #000 0 1px, transparent 1px 9.6px) 0 100% / 100% 3px no-repeat,
    #fff;
}
.hl { flex: none; width: 96px; text-align: center; font-size: 10px; line-height: 16px; height: 16px; }
.hl-first { margin-left: -38.7px; padding-right: 6px; }
.hl-mm { flex: none; margin-left: 7px; font-size: 10px; line-height: 16px; }
.dots { position: absolute; right: 0; top: 3px; width: 7px; height: 13px; background: repeating-linear-gradient(to bottom, #000 0 1px, transparent 1px 4px); }
.expand { display: flex; align-items: center; justify-content: center; }
.bluetri { width: 0; height: 0; border: 4px solid transparent; border-right: 5px solid #11a6ee; border-left: 0; }

.vruler {
  position: relative; display: flex; flex-direction: column; overflow: hidden;
  border-left: 1px solid #000;
  background:
    repeating-linear-gradient(to bottom, #000 0 1px, transparent 1px 96px) 100% 85.6px / 6px 100% no-repeat,
    repeating-linear-gradient(to bottom, #000 0 1px, transparent 1px 9.6px) 100% -0.8px / 5px 100% no-repeat,
    #fff;
}
.vl { height: 96px; flex: none; display: flex; align-items: center; justify-content: flex-start; padding-left: 1px; }
.vl b { font-weight: 400; font-size: 10px; line-height: 11px; writing-mode: vertical-rl; transform: rotate(180deg); background: #fff; }
.vl-first { margin-top: 37.6px; }
.vl-mm { height: 20px; margin-top: -10px; }
.cursorline { position: absolute; left: 1px; right: 0; top: 283px; height: 1px; background: #9a90c8; }

.canvas { background: #fff; border-left: 1px solid #000; display: flex; flex-direction: column; min-height: 0; width: 1726px; }
.artwork {
  width: 1582px; height: 168px; margin: 378px 0 0 81px; background: #000;
  outline: 1px solid #8c8c8c; outline-offset: -1px;
  display: flex; align-items: center; justify-content: center;
}
.arttext {
  font: italic 700 146px/150px "DejaVu Sans", "Liberation Sans", sans-serif;
  letter-spacing: -2.7px; word-spacing: -10px; margin-left: 18px;
  color: transparent; -webkit-text-stroke: 1.4px #0a78e4;
  white-space: nowrap;
}
.canvas-foot {
  margin-top: auto; height: 29px; display: flex; align-items: center; padding-left: 715px; gap: 51px;
  background: linear-gradient(to bottom, #fbfbfb, #f4f4f4); color: #555; font-size: 11.5px;
}
.canvas-foot span:nth-child(3) { margin-left: 10px; }
.vscroll {
  margin-left: 3px; border-left: 1px solid #a8a8a8; border-bottom: 1px solid #a8a8a8; background: #f1f1f1;
  display: flex; flex-direction: column; align-items: center; padding: 15px 0 7px 0;
}
.vthumb { width: 17px; height: 161px; background: #c9c9c9; margin: 267px 0 auto 0; }

.pager { height: 29px; flex: none; display: flex; align-items: center; border-top: 1px solid #fff; background: #f3f3f3; padding-bottom: 2px; }
.pg { flex: none; }
.pg-eye { margin-left: 3px; }
.pg-first { margin-left: 16px; }
.pg-prev { margin-left: 12px; }
.pagetext { margin-left: 21px; width: 46px; flex: none; }
.pg-next { margin-left: 22px; }
.pg-last { margin-left: 11px; }
.pg-add { margin-left: 11px; }
.pg-set { margin-left: 10px; }
.hscroll {
  margin-left: 42px; width: 1326px; height: 20px; flex: none;
  display: flex; align-items: center; justify-content: space-between; padding: 0 5px 0 5px;
  border-top: 2px solid #bbb; border-left: 1px solid #bbb; background: #f1f1f1; position: relative;
}
.hthumb { width: 381px; height: 16px; background: #c9c9c9; margin-left: 459px; margin-right: auto; }
.zoomcombo { margin-left: 7px; width: 64px; height: 24px; display: flex; align-items: center; justify-content: space-between; padding: 0 5px 0 2px; background: #fff; border: 1px solid #6e6e6e; flex: none; }
.zb { width: 15px; height: 15px; border-radius: 50%; background: #d6d6d6; border: 1px solid #bdbdbd; flex: none; margin-left: 10px; display: flex; align-items: center; justify-content: center; }
.zb svg { flex: none; }
.zoomcombo + .zb { margin-left: 11px; }

/* right panel */
.rightpanel { width: 96px; flex: none; display: flex; flex-direction: column; background: #f3f3f3; }
.rp-head { height: 26px; flex: none; display: flex; align-items: center; justify-content: flex-end; padding-right: 12px; gap: 2px; border-bottom: 1px solid #aaa; font-size: 9.5px; }
.rp-tri { width: 0; height: 0; border: 4px solid transparent; border-right: 4px solid #333; border-left: 0; }
.rp-cols { flex: 1; min-height: 0; display: flex; }
.rp-col1 { width: 49px; flex: none; border-right: 1px solid #a8a8a8; display: flex; flex-direction: column; align-items: center; }
.rp-col2 { flex: 1; display: flex; flex-direction: column; align-items: center; }
.rsep { height: 1px; background: #aeaeae; }
.r-fill { margin-top: 11px; flex: none; margin-right: 2px; }
.r1 { width: 34px; margin-top: 9px; }
.r-pal { margin-top: 13px; flex: none; }
.r-grid { margin-top: 9px; flex: none; margin-left: 3px; }
.r2 { width: 34px; margin-top: 12px; }
.palette1 { width: 32px; height: 680px; margin-top: 39px; overflow: hidden; border-left: 1px solid #999; border-top: 1px solid #aaa; background: #d8d8d8; flex: none; }
.swatches { display: grid; grid-template-columns: 14px 14px; grid-auto-rows: 14px; gap: 1px; padding-left: 1px; }
.swatches i.d { background-image: radial-gradient(circle at 30% 30%, rgba(255,255,255,.28) 0 .5px, transparent 1px), radial-gradient(circle at 70% 70%, rgba(0,0,0,.14) 0 .5px, transparent 1px); background-size: 6px 6px; }
.pal-down { margin-top: 6px; width: 0; height: 0; border: 4px solid transparent; border-top: 4px solid #111; border-bottom: 0; flex: none; }
.fbox { width: 21px; height: 22px; flex: none; }
.fbox-a { margin-top: 5px; border: 1px solid #c8c8c8; border-bottom-color: #fff; background: #f5f5f5; }
.r-arrow { margin-top: 4px; flex: none; }
.fbox-b { margin-top: 3px; border: 1px solid #fff; background: #e6e6e6; }
.r-sel { margin-top: 11px; flex: none; }
.r3 { width: 33px; margin-top: 11px; }
.r-funnel { margin-top: 11px; flex: none; }
.r-circle { margin-top: 14px; flex: none; }
.r-lines { margin-top: 14px; flex: none; }
.r4 { width: 33px; margin-top: 11px; }
.r-drop { margin-top: 10px; flex: none; }
.palette2 { margin-top: 12px; width: 31px; flex: none; border: 1px solid #a4a4a4; background: #fff; }
.pal2-head { height: 13px; display: flex; }
.s2col { background: #ddd; padding-left: 0; grid-template-columns: 14.5px 14.5px; }
.palmenu { margin-top: 12px; margin-left: 2px; display: flex; align-items: center; gap: 2px; flex: none; }
.r5 { width: 47px; margin-top: 8px; }
.docwell { margin-top: 4px; width: 34px; height: 245px; flex: none; background: #e4e4e4; border-left: 1px solid #aaa; border-right: 1px solid #aaa; border-bottom: 1px solid #ccc; }
.docrow { display: flex; }
.dc-k, .dc-b { width: 16px; height: 15px; }
.dc-k { background: #000; }
.dc-b { background: #0080ff; }
.fillstroke { margin-top: 13px; display: flex; flex-direction: column; gap: 5px; align-items: center; flex: none; }
.fs { display: flex; align-items: center; gap: 2px; width: 26px; justify-content: center; }
.fs-box { width: 10px; height: 10px; background: #f6f6f6; border: 1px solid #ccc; }
.fs-red { background: #f00; border-color: #fff; }

/* status */
.statusbar { height: 26px; flex: none; display: flex; align-items: center; position: relative; background: #f3f3f3; border-top: 1px solid #a9a9a9; padding-bottom: 2px; }
.st { flex: none; white-space: nowrap; }
.st-doc { margin-left: 3px; flex: none; }
.st-name { margin-left: 8px; width: 85px; }
.ssep { width: 1px; height: 20px; background: #b0b0b0; flex: none; }
.st-chip { margin-left: 9px; flex: none; }
.st-pct { margin-left: 3px; width: 21px; }
.st-mem { width: 169px; margin-left: 1px; }
.st-pos { margin-left: 19px; width: 141px; }
.st-info { margin-left: 7px; flex: none; }
.st-mode { margin-left: 7px; width: 1052px; }
.st-name + .ssep { margin-left: 82px; }
.mode-btn { width: 20px; height: 20px; flex: none; display: flex; align-items: center; justify-content: center; }
.mode-btn.active { background: #dcdcdc; border: 1px solid #b8b8b8; margin-left: 4px; }
.mb2 { margin-left: 5px; }
.mb3 { margin-left: 1px; }
.mb4 { margin-left: 4px; }
.faded { opacity: .7; }
.st-field { margin-left: 3px; width: 80px; height: 20px; flex: none; background: #f3f3f3; border: 1px solid #b8b8b8; padding: 2px 0 2px 10px; }
.st-field i { width: 1px; height: 100%; background: #000; }
.st-check { margin-left: 10px; width: 14px; height: 14px; flex: none; background: #fff; border: 1px solid #444; display: flex; align-items: center; justify-content: center; }
.st-tools { margin-left: 3px; }
.grip { position: absolute; right: 1px; bottom: 1px; width: 8px; height: 8px; background: repeating-linear-gradient(135deg, #aaa 0 1px, transparent 1px 3px); }

/* task bar */
.taskbar {
  height: 40px; flex: none; display: flex; align-items: center; color: #fff;
  background: linear-gradient(to right, #2a1f24 0%, #2a2128 25%, #2c2027 55%, #40201f 80%, #44211f 100%);
  font-family: "Noto Sans", "Open Sans", sans-serif;
}
.tk-win { margin-left: 15px; flex: none; }
.searchbox {
  margin-left: 17px; width: 288px; height: 40px; flex: none; display: flex; align-items: center; overflow: hidden; position: relative;
  background: #3a3a3a; border: 1px solid #6a6a6a; border-bottom: 0; padding-left: 11px;
}
.searchbox span { margin-left: 12px; font-size: 13.8px; color: #e6e6e6; }
.sunpic { position: absolute; right: -1px; bottom: 0; }
.tk { width: 49px; height: 40px; flex: none; display: flex; align-items: center; justify-content: center; position: relative; }
.tk-first { margin-left: -1px; }
.tk-run::after { content: ""; position: absolute; left: 5px; right: 4px; bottom: 0; height: 2px; background: #a9a4e0; }
.chrome-k { margin-left: 5px; }
.tk-active { background: #4c4a4c; }
.tray { margin-left: auto; display: flex; align-items: center; height: 40px; }
.weather { display: flex; margin-right: 7px; }
.temp { font-size: 13px; width: 38px; }
.cond { font-size: 13.4px; width: 110px; white-space: nowrap; }
.chev { flex: none; }
.tr-a { margin-left: 13px; flex: none; }
.tr-b { margin-left: 11px; flex: none; }
.tr-c { margin-left: 9px; flex: none; }
.tr-d { margin-left: 8px; flex: none; }
.eng { margin-left: 10px; font-size: 11.5px; width: 31px; }
.clock { width: 62px; display: flex; flex-direction: column; align-items: center; font-size: 11.5px; line-height: 18px; margin-left: 2px; }
.notif { margin-left: 18px; margin-right: 23px; flex: none; }
.o-letter { font: 700 11px "Liberation Sans", sans-serif; fill: #fff; text-anchor: middle; }
.k-letter { font: 700 10px "Liberation Sans", sans-serif; fill: #cfe8d4; text-anchor: middle; }
.w-badge { font: 700 9px "Liberation Sans", sans-serif; fill: #fff; text-anchor: middle; }
.t-letter { font: 700 6.5px "Liberation Sans", sans-serif; fill: #1f4fc0; text-anchor: middle; }
```
